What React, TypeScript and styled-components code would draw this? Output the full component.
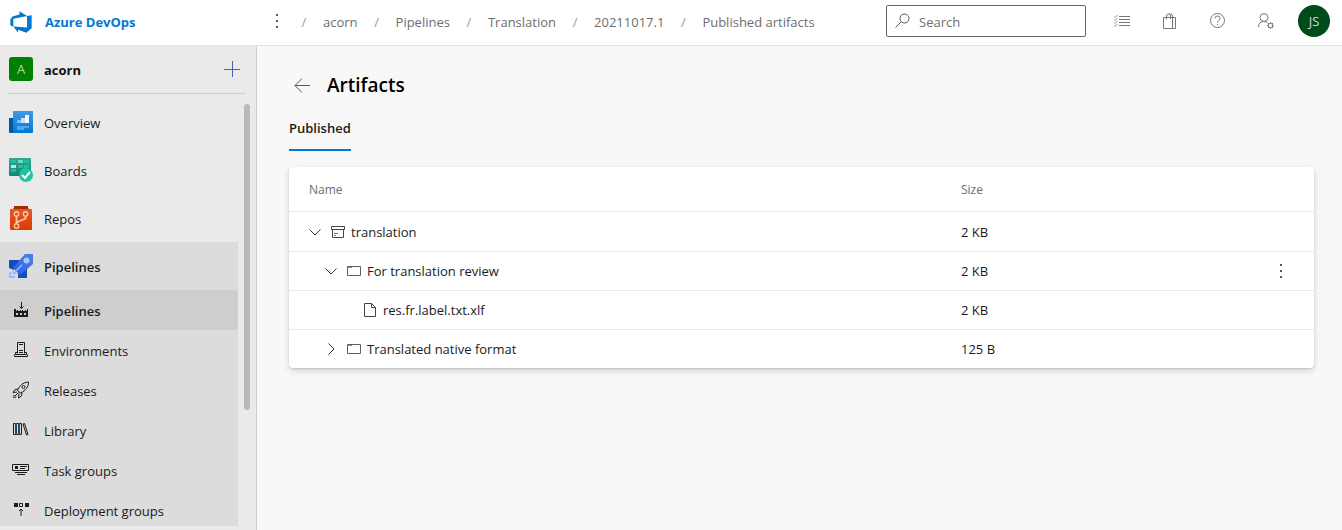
import React from "react";
import styled, { createGlobalStyle } from "styled-components";

const GlobalStyle = createGlobalStyle`
  *, *::before, *::after { box-sizing: border-box; }
  body {
    margin: 0;
    font-family: "Open Sans", "Noto Sans", sans-serif;
    font-size: 13px;
    line-height: 20px;
    color: #1b1b1b;
    background: #f8f8f8;
  }
  button, input { font: inherit; color: inherit; }
  a { color: inherit; text-decoration: none; }
  svg { display: block; flex: none; }
`;

const Page = styled.div`
  display: flex;
  flex-direction: column;
  height: 100vh;
`;

const TopBar = styled.header`
  display: flex;
  align-items: center;
  flex: none;
  height: 46px;
  padding: 0 12px 3px 9px;
  background: #fff;
  border-bottom: 1px solid #e2e2e2;
`;

const Brand = styled.a`
  display: flex;
  align-items: center;
  gap: 12px;
  width: 260px;
  flex: none;
  padding-top: 2px;
  color: #0078d4;
  font-weight: 700;
`;

const IconButton = styled.button<{ $size?: number }>`
  display: flex;
  align-items: center;
  justify-content: center;
  flex: none;
  width: ${(p) => p.$size ?? 32}px;
  height: ${(p) => p.$size ?? 32}px;
  padding: 0;
  border: 0;
  background: none;
  color: #555;
`;

const Crumbs = styled.ol`
  display: flex;
  flex: 1;
  margin: 0;
  padding: 2px 0 0;
  list-style: none;
  color: #6e6e6e;
  white-space: nowrap;
`;

const Crumb = styled.li`
  display: flex;
  &::before {
    content: "/";
    width: 38px;
    text-align: center;
    color: #999;
  }
`;

const SearchBox = styled.label`
  display: flex;
  align-items: center;
  gap: 8px;
  flex: none;
  width: 200px;
  height: 32px;
  margin-right: 20px;
  padding: 0 8px;
  border: 1px solid #666;
  border-radius: 2px;
`;

const SearchInput = styled.input`
  flex: 1;
  min-width: 0;
  padding: 2px 0 0;
  border: 0;
  outline: 0;
  background: none;
  &::placeholder { color: #707070; opacity: 1; }
`;

const Tools = styled.div`
  display: flex;
  gap: 16px;
  ${IconButton} { color: #777; }
`;

const Avatar = styled.button`
  width: 32px;
  height: 32px;
  padding: 0;
  border: 0;
  border-radius: 50%;
  background: #004b1c;
  color: #c9dccf;
`;

const Body = styled.div`
  display: flex;
  flex: 1;
  min-height: 0;
`;

const Sidebar = styled.aside`
  display: flex;
  flex-direction: column;
  flex: none;
  width: 257px;
  padding-bottom: 4px;
  background: #eaeaea;
  border-right: 1px solid #d0d0d0;
`;

const Project = styled.div`
  display: flex;
  align-items: center;
  flex: none;
  height: 48px;
  margin: 0 10px 4px 7px;
  padding: 0 0 2px 2px;
  border-bottom: 1px solid #cfcfcf;
`;

const Label = styled.span`
  padding-top: 2px;
`;

const ProjectLink = styled.a`
  display: flex;
  align-items: center;
  gap: 11px;
  flex: 1;
  font-weight: 700;
  color: #111;
`;

const ProjectBadge = styled.span`
  width: 24px;
  height: 24px;
  border-radius: 3px;
  background: #008000;
  color: #a6d8a6;
  font-weight: 400;
  line-height: 24px;
  text-align: center;
`;

const Scroller = styled.div`
  display: flex;
  flex: 1;
  min-height: 0;
  gap: 6px;
`;

const Nav = styled.nav`
  width: 238px;
  overflow: hidden;
`;

const ScrollThumb = styled.div`
  width: 6px;
  height: 306px;
  margin-top: 6px;
  border-radius: 3px;
  background: #b9b9b9;
`;

const NavItem = styled.a<{ $active?: boolean }>`
  display: flex;
  align-items: center;
  gap: 11px;
  height: 48px;
  padding-left: 9px;
  font-weight: ${(p) => (p.$active ? 600 : 400)};
  background: ${(p) => (p.$active ? "#dcdcdc" : "transparent")};
`;

const SubNav = styled.div`
  background: #dcdcdc;
`;

const SubItem = styled.a<{ $active?: boolean }>`
  display: flex;
  align-items: center;
  gap: 15px;
  height: 40px;
  padding-left: 12px;
  border-radius: 0 2px 2px 0;
  font-weight: ${(p) => (p.$active ? 600 : 400)};
  background: ${(p) => (p.$active ? "#cecece" : "transparent")};
`;

const SubIcon = styled.span`
  display: flex;
  justify-content: center;
  width: 17px;
`;

const Main = styled.main`
  flex: 1;
  min-width: 0;
  padding: 23px 28px 32px 32px;
`;

const TitleRow = styled.div`
  display: flex;
  align-items: center;
  gap: 12px;
  height: 32px;
`;

const Title = styled.h1`
  margin: 0;
  font-size: 19px;
  font-weight: 600;
  line-height: 28px;
  color: #000;
`;

const Tabs = styled.div`
  display: flex;
  margin: 5px 0 16px;
`;

const Tab = styled.button`
  height: 45px;
  padding: 0;
  border: 0;
  border-bottom: 2px solid #0078d4;
  background: none;
  font-weight: 600;
`;

const Card = styled.section`
  background: #fff;
  border-radius: 4px;
  box-shadow: 0 3px 7px rgba(0, 0, 0, 0.14), 0 1px 2px rgba(0, 0, 0, 0.12);
`;

const Table = styled.table`
  width: 100%;
  border-collapse: separate;
  border-spacing: 0;
  table-layout: fixed;
`;

const HeadCell = styled.th<{ $width?: number }>`
  width: ${(p) => (p.$width ? `${p.$width}px` : "auto")};
  height: 45px;
  padding: 2px 20px 0;
  border-bottom: 1px solid #eaeaea;
  font-size: 12px;
  font-weight: 400;
  text-align: left;
  color: #6e6e6e;
`;

const Cell = styled.td`
  height: 39px;
  padding: 0 20px;
  border-bottom: 1px solid #eaeaea;
  tr:first-child > & { height: 40px; }
  tr:last-child > & { height: 38px; border-bottom: 0; }
`;

const NameCell = styled(Cell)`
  padding-left: 18px;
`;

const MenuCell = styled(Cell)`
  padding: 0 17px;
`;

const NameContent = styled.div<{ $level: number }>`
  display: flex;
  align-items: center;
  gap: 5px;
  padding-left: ${(p) => p.$level * 16}px;
`;

const ExpanderSlot = styled.span`
  display: flex;
  width: 18px;
`;

const Expander = styled.button`
  width: 16px;
  height: 16px;
  padding: 0;
  border: 0;
  background: none;
`;

type Glyph = { children: React.ReactNode; size?: number };

const Line = ({ children, size = 16 }: Glyph) => (
  <svg width={size} height={size} viewBox={`0 0 ${size} ${size}`} fill="none" stroke="currentColor" aria-hidden="true">
    {children}
  </svg>
);

const DotsIcon = () => (
  <Line>
    <path d="M7 1h2v2H7zM7 7h2v2H7zM7 13h2v2H7z" fill="currentColor" stroke="none" />
  </Line>
);

const LogoIcon = () => (
  <svg width="24" height="24" viewBox="0 0 18 18" fill="#0078d4" aria-hidden="true">
    <path d="M17 4v9.740l-4 3.280-6.200-2.260V17l-3.510-4.590 10.230.8V4.440zm-3.410.49L7.850 1v2.290L2.580 4.840 1 6.870v4.610l2.260 1V6.570z" />
  </svg>
);

const OverviewIcon = () => (
  <svg width="24" height="24" viewBox="0 0 24 24" aria-hidden="true">
    <defs>
      <linearGradient id="ov" x1="0" y1="0" x2="0" y2="1">
        <stop offset="0" stopColor="#429ae4" />
        <stop offset="1" stopColor="#0078d4" />
      </linearGradient>
    </defs>
    <path d="M0 8h5v15H1q-1 0-1-1z" fill="#005a9e" />
    <path d="M4 1h20v21q0 1-1 1H4z" fill="url(#ov)" />
    <path d="M8 10h4v3H8z" fill="#83beec" />
    <path d="M12 8h4v5h-4z" fill="#c3e1f7" />
    <path d="M16 5h4v8h-4z" fill="#f4faff" />
    <path d="M8 16h12v2H8zM8 18h7v2H8z" fill="#4fa6e8" />
  </svg>
);

const BoardsIcon = () => (
  <svg width="24" height="24" viewBox="0 0 24 24" aria-hidden="true">
    <defs>
      <linearGradient id="bd" x1="0" y1="0" x2="0" y2="1">
        <stop offset="0" stopColor="#36a491" />
        <stop offset="1" stopColor="#148573" />
      </linearGradient>
    </defs>
    <path d="M1 0h20q1 0 1 1v17H1q-1 0-1-1V1q0-1 1-1z" fill="url(#bd)" />
    <path d="M2 2h5v3H2zM15 2h5v3h-5zM9 7h5v3H9zM15 7h5v3h-5zM2 11h5v3H2z" fill="#1cbf9b" />
    <path d="M9 2h5v3H9z" fill="#62e0c8" />
    <path d="M2 7h5v3H2z" fill="#a5f5e5" />
    <circle cx="17" cy="17" r="7" fill="#1cc5a2" />
    <path d="m13 17 3 3 5-6" fill="none" stroke="#fff" strokeWidth="2" />
  </svg>
);

const ReposIcon = () => (
  <svg width="24" height="24" viewBox="0 0 24 24" aria-hidden="true">
    <defs>
      <linearGradient id="rp" x1="0" y1="0" x2="0" y2="1">
        <stop offset="0" stopColor="#e45a24" />
        <stop offset="1" stopColor="#d83b01" />
      </linearGradient>
    </defs>
    <path d="M5 0h14v2l2 2H3l2-2z" fill="#a62b00" />
    <path d="M2 3h20q1 0 1 1v19q0 1-1 1H2q-1 0-1-1V4q0-1 1-1z" fill="url(#rp)" />
    <g fill="none" stroke="#ffc4a8" strokeWidth="1.4">
      <circle cx="7.500" cy="8" r="2.200" />
      <circle cx="16.500" cy="8" r="2.200" />
      <circle cx="7.500" cy="20" r="2.200" />
      <path d="M7.500 10.500v7M7.500 16.500l9-4v-2" strokeWidth="1.800" />
    </g>
  </svg>
);

const RocketIcon = () => (
  <svg width="24" height="24" viewBox="0 0 24 24" aria-hidden="true">
    <defs>
      <linearGradient id="pl" x1="1" y1="0" x2="0" y2="1">
        <stop offset="0" stopColor="#4f80ee" />
        <stop offset="1" stopColor="#2560e0" />
      </linearGradient>
    </defs>
    <path d="M0 6h11l-6 10-5-2zM18 13v11H9v-5z" fill="#194bbc" />
    <path d="M16 0h8v10L11 21l-7-7z" fill="url(#pl)" />
    <circle cx="17.500" cy="6.500" r="3" fill="#a9c4fb" />
    <path d="m12.500 10.500 1 1L7 18l-1-1z" fill="#86abf8" stroke="#86abf8" strokeWidth=".5" />
    <path d="M0 18h2v4h4v2H0zM4 15l1 3 4 1-4 2-2-2z" fill="#9ab9f5" />
  </svg>
);

const FactoryIcon = () => (
  <Line>
    <path d="M8.500 0v6M6.500 4.500l2 2 2-2" />
    <path d="M1 7h2v2h1V8h1v1h2V8h1v1h1V8h1v1h2V8h1v1h1V7h1v8H1zM3 11v2h2v-2zM7 11v2h2v-2zM11 11v2h2v-2z" fill="currentColor" fillRule="evenodd" stroke="none" />
  </Line>
);

const ServerIcon = () => (
  <Line>
    <path d="M4.500 11.500v-11h7v11M6 2.500h4M6 8.500h4M6 10.500h4M4 10.500H2.500v2h11v-2H12M1.500 12.500v2h13v-2" />
  </Line>
);

const LaunchIcon = () => (
  <Line size={18}>
    <path d="M5.500 9.500c2-5 5-8 11-8.500 0 5-2.500 8.500-8 11zM6 8 3 8.500l-2 3 4-.5M10 11.500 9.500 15l-3 2 .5-4.500M6.500 11.500l-3 3" />
    <circle cx="11.500" cy="6" r="1.500" />
    <circle cx="2.500" cy="15.500" r="1.200" />
  </Line>
);

const BooksIcon = () => (
  <Line>
    <path d="M.5 1.500h2v11h-2zM3.500 1.500h2v11h-2zM6.500 1.500h2v11h-2z" />
    <path d="m10 2 1.500-.5 3.500 11-1.500.5z" />
    <path d="M3 2v10M6 2v10" stroke="#2f77b0" />
  </Line>
);

const TasksIcon = () => (
  <Line size={18}>
    <path d="M.5 3.500h16v6H.5zM8 5.500h7M8 7.500h5M3 11.500h12M5 13.500h8" />
    <path d="M3 5h3v3H3z" fill="currentColor" stroke="none" />
  </Line>
);

const DeployIcon = () => (
  <Line>
    <path d="M1 1h4v4H1zM12 1h4v4h-4z" fill="currentColor" stroke="none" />
    <path d="M6.500 1.500h3v3h-3zM8 14V7M6 9l2-2 2 2" />
  </Line>
);

const PlusIcon = () => (
  <Line>
    <path d="M8.500 0v16M0 8.500h16" stroke="#3f65b8" />
  </Line>
);

const BackIcon = () => (
  <Line>
    <path d="M16 8.500H1M8 1.500l-7 7 7 7" />
  </Line>
);

const SearchIcon = () => (
  <Line>
    <circle cx="9.500" cy="5.500" r="4.500" stroke="#555" />
    <path d="m6 9-5.500 5.500" stroke="#555" />
  </Line>
);

const ListIcon = () => (
  <Line>
    <path d="M5 3.500h11M5 6.500h11M5 9.500h11M5 12.500h11" />
    <path d="m0 3.500 1 1 2.500-2.500M0 6.500l1 1L3.500 5M0 9.500l1 1L3.500 8M0 12.500l1 1L3.500 11" strokeWidth=".8" />
  </Line>
);

const BagIcon = () => (
  <Line>
    <path d="M1.500 4.500h12v11h-12zM10.500 4.500v11M4.500 6.500V3q0-2 2-2t2 2v3M7 1.500q1-1 2-.5 1.500.5 1.500 2v3" />
  </Line>
);

const HelpIcon = () => (
  <Line>
    <circle cx="7.500" cy="7.500" r="7" />
    <path d="M5 5.500Q5 3 7.500 3T10 5.500q0 1-1.200 1.800t-1.300 2.200" />
    <path d="M7 11h1v1H7z" fill="currentColor" stroke="none" />
  </Line>
);

const UserIcon = () => (
  <Line>
    <circle cx="6" cy="4.500" r="4" />
    <path d="M.5 14c0-3.500 2-5.500 5.500-5.500 1.500 0 2.500.4 3.500 1" />
    <circle cx="12.500" cy="12.500" r="2.200" />
    <path d="M12.500 9v1.300M12.500 14.700V16M9 12.500h1.300M14.700 12.500H16M10 10l1 1M14 14l1 1M10 15l1-1M14 11l1-1" />
  </Line>
);

const ChevronDown = () => (
  <Line>
    <path d="m2.500 5.500 5.500 5.500 5.500-5.500" stroke="#333" />
  </Line>
);

const ChevronRight = () => (
  <Line>
    <path d="m5.500 2.500 5.500 5.500-5.500 5.500" stroke="#333" />
  </Line>
);

const ArchiveIcon = () => (
  <Line>
    <path d="M1.500 2.500h13v3h-13zM2.500 5.500v8h11v-8" stroke="#444" />
    <path d="M4 9.500h4M4 11.500h2" stroke="#777" />
  </Line>
);

const FolderIcon = () => (
  <Line>
    <path d="M1.500 3.500h13v9h-13z" stroke="#665c66" />
    <path d="M2 4.500h4" stroke="#888" />
  </Line>
);

const FileIcon = () => (
  <Line>
    <path d="M2.500 1.500h7l4 4v9h-11zM9.500 1.500v4h4" stroke="#444" />
  </Line>
);

const crumbs = ["acorn", "Pipelines", "Translation", "20211017.1", "Published artifacts"];

const hubs = [
  { label: "Overview", icon: <OverviewIcon /> },
  { label: "Boards", icon: <BoardsIcon /> },
  { label: "Repos", icon: <ReposIcon /> },
  { label: "Pipelines", icon: <RocketIcon />, active: true },
];

const pipelineHubs = [
  { label: "Pipelines", icon: <FactoryIcon />, active: true },
  { label: "Environments", icon: <ServerIcon /> },
  { label: "Releases", icon: <LaunchIcon /> },
  { label: "Library", icon: <BooksIcon /> },
  { label: "Task groups", icon: <TasksIcon /> },
  { label: "Deployment groups", icon: <DeployIcon /> },
];

type Row = { name: string; size: string; level: number; icon: React.ReactNode; open?: boolean; menu?: boolean };

const rows: Row[] = [
  { name: "translation", size: "2 KB", level: 0, icon: <ArchiveIcon />, open: true },
  { name: "For translation review", size: "2 KB", level: 1, icon: <FolderIcon />, open: true, menu: true },
  { name: "res.fr.label.txt.xlf", size: "2 KB", level: 2, icon: <FileIcon /> },
  { name: "Translated native format", size: "125 B", level: 1, icon: <FolderIcon />, open: false },
];

export default function App() {
  return (
    <Page>
      <GlobalStyle />
      <TopBar>
        <Brand href="#">
          <LogoIcon />
          Azure DevOps
        </Brand>
        <IconButton $size={16} aria-label="More">
          <DotsIcon />
        </IconButton>
        <Crumbs>
          {crumbs.map((c) => (
            <Crumb key={c}>
              <a href="#">{c}</a>
            </Crumb>
          ))}
        </Crumbs>
        <SearchBox>
          <SearchIcon />
          <SearchInput type="text" placeholder="Search" aria-label="Search" />
        </SearchBox>
        <Tools>
          <IconButton aria-label="Work items"><ListIcon /></IconButton>
          <IconButton aria-label="Marketplace"><BagIcon /></IconButton>
          <IconButton aria-label="Help"><HelpIcon /></IconButton>
          <IconButton aria-label="User settings"><UserIcon /></IconButton>
          <Avatar aria-label="Account">JS</Avatar>
        </Tools>
      </TopBar>
      <Body>
        <Sidebar>
          <Project>
            <ProjectLink href="#">
              <ProjectBadge>A</ProjectBadge>
              <Label>acorn</Label>
            </ProjectLink>
            <IconButton $size={28} aria-label="Add"><PlusIcon /></IconButton>
          </Project>
          <Scroller>
            <Nav>
              {hubs.map((h) => (
                <NavItem key={h.label} href="#" $active={h.active}>
                  {h.icon}
                  <Label>{h.label}</Label>
                </NavItem>
              ))}
              <SubNav>
                {pipelineHubs.map((h) => (
                  <SubItem key={h.label} href="#" $active={h.active}>
                    <SubIcon>{h.icon}</SubIcon>
                    <Label>{h.label}</Label>
                  </SubItem>
                ))}
              </SubNav>
            </Nav>
            <ScrollThumb />
          </Scroller>
        </Sidebar>
        <Main>
          <TitleRow>
            <IconButton $size={26} aria-label="Back"><BackIcon /></IconButton>
            <Title>Artifacts</Title>
          </TitleRow>
          <Tabs role="tablist">
            <Tab role="tab" aria-selected="true">Published</Tab>
          </Tabs>
          <Card>
            <Table>
              <thead>
                <tr>
                  <HeadCell scope="col">Name</HeadCell>
                  <HeadCell scope="col" $width={307}>Size</HeadCell>
                  <HeadCell as="td" $width={66} />
                </tr>
              </thead>
              <tbody>
                {rows.map((r) => (
                  <tr key={r.name}>
                    <NameCell>
                      <NameContent $level={r.level}>
                        <ExpanderSlot>
                          {r.open !== undefined && (
                            <Expander aria-label="Toggle" aria-expanded={r.open}>
                              {r.open ? <ChevronDown /> : <ChevronRight />}
                            </Expander>
                          )}
                        </ExpanderSlot>
                        {r.icon}
                        <span>{r.name}</span>
                      </NameContent>
                    </NameCell>
                    <Cell>{r.size}</Cell>
                    <MenuCell>
                      {r.menu && <IconButton aria-label="More actions"><DotsIcon /></IconButton>}
                    </MenuCell>
                  </tr>
                ))}
              </tbody>
            </Table>
          </Card>
        </Main>
      </Body>
    </Page>
  );
}
